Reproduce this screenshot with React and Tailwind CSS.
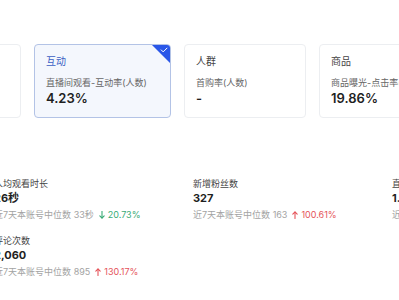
import React from 'react'

const cards = [
  { title: '转化', label: '成交率(人数)', value: '2.15%', width: 'w-[137px]' },
  { title: '互动', label: '直播间观看-互动率(人数)', value: '4.23%', width: 'w-[137px]', active: true },
  { title: '人群', label: '首购率(人数)', value: '-', width: 'w-[122px]' },
  { title: '商品', label: '商品曝光-点击率(人数)', value: '19.86%', width: 'w-[137px]' },
]

const metrics = [
  { label: '人均观看时长', value: '26秒', median: '33秒', trend: 'down', pct: '20.73%' },
  { label: '新增粉丝数', value: '327', median: '163', trend: 'up', pct: '100.61%' },
  { label: '直播间曝光人数', value: '1.2万', median: '8,326', trend: 'up', pct: '44.12%' },
  { label: '评论次数', value: '2,060', median: '895', trend: 'up', pct: '130.17%' },
]

function Arrow({ up }) {
  return (
    <svg width="6" height="8" viewBox="0 0 6 8" className="mr-[3px]" fill="none" stroke="currentColor" strokeWidth="1.1" strokeLinecap="round" strokeLinejoin="round">
      {up ? (
        <>
          <path d="M3 7.5V1" />
          <path d="M0.8 3.2L3 1l2.2 2.2" />
        </>
      ) : (
        <>
          <path d="M3 0.5V7" />
          <path d="M0.8 4.8L3 7l2.2-2.2" />
        </>
      )}
    </svg>
  )
}

function Card({ card }) {
  return (
    <div
      className={`relative shrink-0 h-[74px] ${card.width} rounded-[4px] border overflow-hidden pl-[11px] pt-[9px] ${
        card.active ? 'border-[#b3c3e6] bg-[#f4f7fd]' : 'border-[#eceef1] bg-white'
      }`}
    >
      <div className={`text-[10px] leading-[14px] ${card.active ? 'text-[#3b5fc4]' : 'text-[#444]'}`}>{card.title}</div>
      <div className="mt-[8px] text-[9px] leading-[13px] text-[#666] whitespace-nowrap">{card.label}</div>
      <div className="mt-[1px] text-[13px] leading-[16px] font-semibold text-[#1f1f1f]">{card.value}</div>
      {card.active && (
        <div className="absolute top-0 right-0 w-[18px] h-[18px]">
          <svg width="18" height="18" viewBox="0 0 18 18">
            <path d="M0 0H18V18Z" fill="#2a57e8" />
            <path d="M9.2 4.9l2 2 3.8-3.8" fill="none" stroke="#fff" strokeWidth="1" strokeLinecap="round" strokeLinejoin="round" />
          </svg>
        </div>
      )}
    </div>
  )
}

export default function App() {
  return (
    <div className="w-[399px] h-[300px] overflow-hidden bg-white font-['Inter','Noto_Sans_CJK_SC',sans-serif]">
      <div className="pt-[44px] flex gap-[13px] -ml-[116px]">
        {cards.map((c) => (
          <Card key={c.title} card={c} />
        ))}
      </div>

      <div className="mt-[59px] -ml-[6px] grid grid-cols-[199px_199px_199px] gap-y-[13px]">
        {metrics.map((m) => (
          <div key={m.label} className="whitespace-nowrap">
            <div className="text-[9px] leading-[13px] text-[#444]">{m.label}</div>
            <div className="mt-[1px] text-[11px] leading-[15px] font-bold text-[#1f1f1f]">{m.value}</div>
            <div className="mt-[2px] flex items-center text-[9px] leading-[13px]">
              <span className="text-[#a3a3a3]">近7天本账号中位数 {m.median}</span>
              <span className={`ml-[5px] flex items-center ${m.trend === 'up' ? 'text-[#e5545a]' : 'text-[#3aab76]'}`}>
                <Arrow up={m.trend === 'up'} />
                {m.pct}
              </span>
            </div>
          </div>
        ))}
      </div>
    </div>
  )
}
